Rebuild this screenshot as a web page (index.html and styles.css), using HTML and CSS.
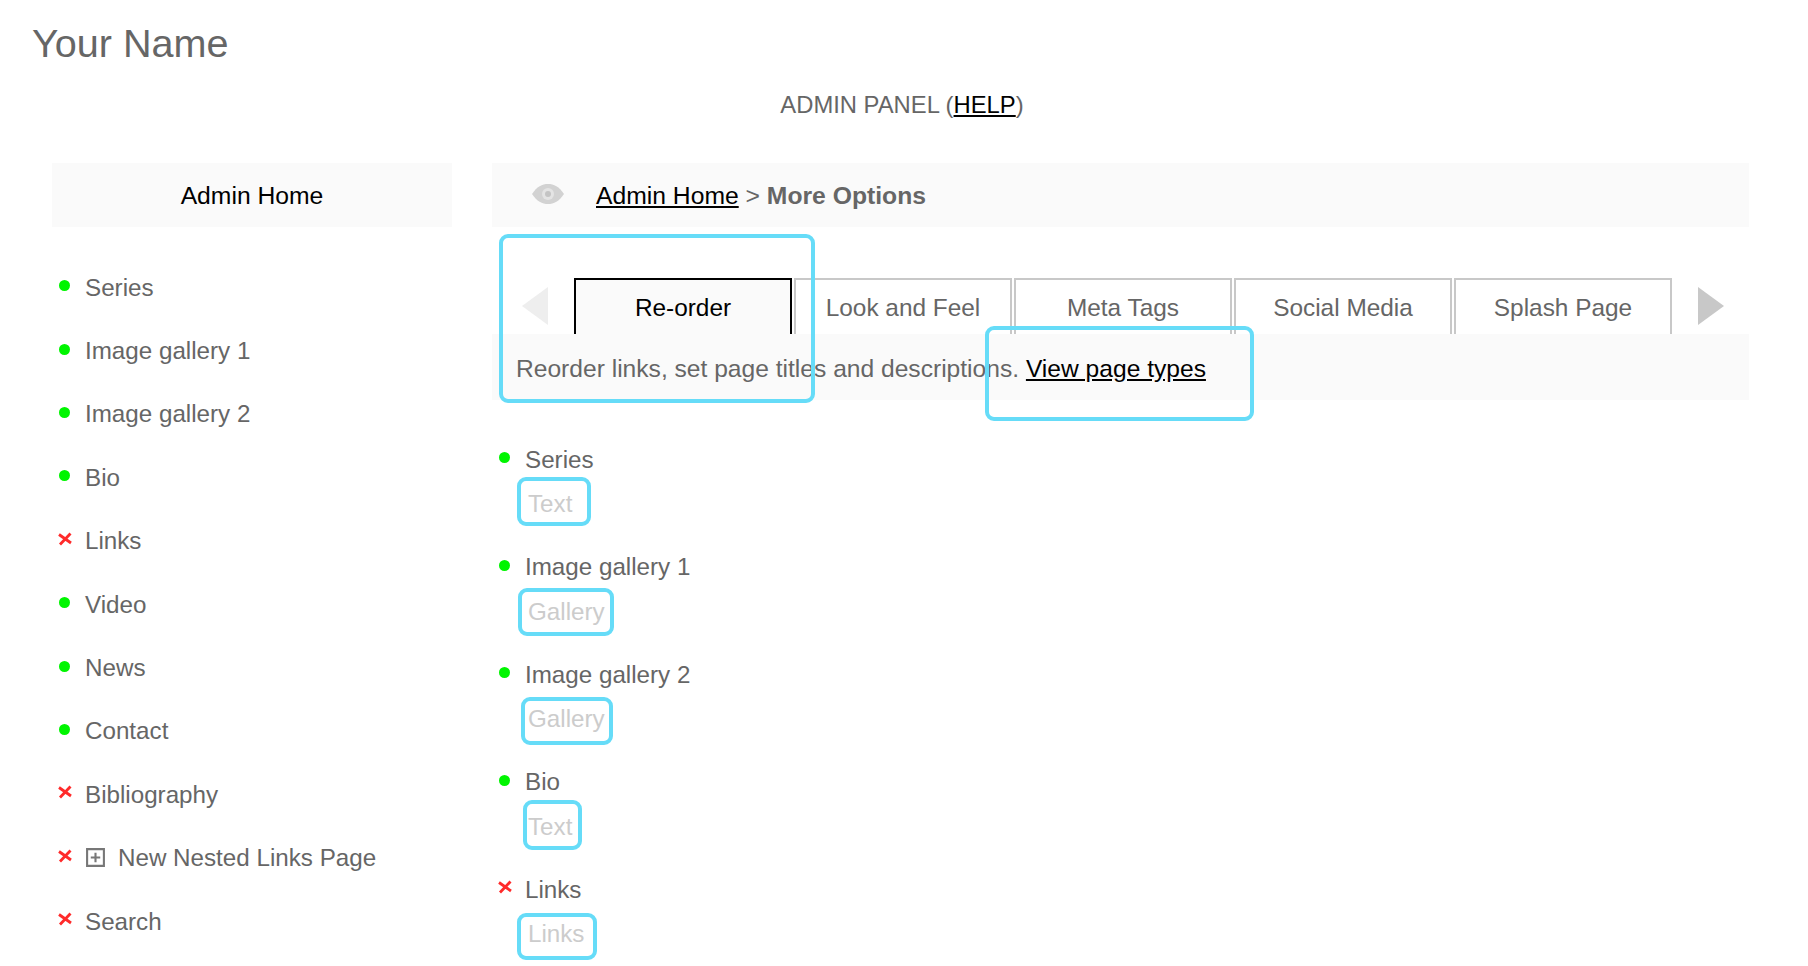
FILE: index.html
```html
<!DOCTYPE html>
<html lang="en">
<head>
    <meta charset="UTF-8">
    <title>Admin Panel</title>
    <link rel="stylesheet" href="styles.css">
</head>
<body>
    <h1 class="site-name">Your Name</h1>
    <p class="panel-title">ADMIN PANEL (<a href="#">HELP</a>)</p>

    <div class="columns">
        <div class="sidebar">
            <div class="side-head"><a href="#">Admin Home</a></div>
            <ul class="side-list">
                <li><span class="dot"></span>Series</li>
                <li><span class="dot"></span>Image gallery 1</li>
                <li><span class="dot"></span>Image gallery 2</li>
                <li><span class="dot"></span>Bio</li>
                <li><svg class="cross" viewBox="0 0 16 14"><path d="M2 2.5 14 11M13.5 1.5 3 12.5"/></svg>Links</li>
                <li><span class="dot"></span>Video</li>
                <li><span class="dot"></span>News</li>
                <li><span class="dot"></span>Contact</li>
                <li><svg class="cross" viewBox="0 0 16 14"><path d="M2 2.5 14 11M13.5 1.5 3 12.5"/></svg>Bibliography</li>
                <li>
                    <svg class="cross" viewBox="0 0 16 14"><path d="M2 2.5 14 11M13.5 1.5 3 12.5"/></svg>
                    <svg class="expand" viewBox="0 0 20 20"><path d="M2 2h16v16H2zM10 5.5v9M5.5 10h9"/></svg>New Nested Links Page
                </li>
                <li><svg class="cross" viewBox="0 0 16 14"><path d="M2 2.5 14 11M13.5 1.5 3 12.5"/></svg>Search</li>
            </ul>
        </div>

        <div class="main">
            <div class="crumbs">
                <svg class="eye" viewBox="0 0 34 22"><path class="eye-shape" d="M1 11C6 3.5 11 1 17 1s11 2.500 16 10c-5 7.500-10 10-16 10S6 18.500 1 11z"/><circle class="eye-ring" cx="17" cy="11" r="6"/><circle class="eye-pupil" cx="17" cy="11" r="3"/></svg>
                <a href="#">Admin Home</a>&nbsp;&gt;&nbsp;<strong>More Options</strong>
            </div>

            <div class="tabs">
                <span class="arrow arrow-left"></span>
                <a class="tab active" href="#">Re-order</a>
                <a class="tab" href="#">Look and Feel</a>
                <a class="tab" href="#">Meta Tags</a>
                <a class="tab" href="#">Social Media</a>
                <a class="tab" href="#">Splash Page</a>
                <span class="arrow arrow-right"></span>
            </div>
            <div class="tab-desc">Reorder links, set page titles and descriptions. <a href="#">View page types</a></div>

            <div class="page-list">
                <div class="page-item">
                    <div class="page-name"><span class="dot"></span>Series</div>
                    <div class="page-type">Text</div>
                </div>
                <div class="page-item">
                    <div class="page-name"><span class="dot"></span>Image gallery 1</div>
                    <div class="page-type">Gallery</div>
                </div>
                <div class="page-item">
                    <div class="page-name"><span class="dot"></span>Image gallery 2</div>
                    <div class="page-type">Gallery</div>
                </div>
                <div class="page-item">
                    <div class="page-name"><span class="dot"></span>Bio</div>
                    <div class="page-type">Text</div>
                </div>
                <div class="page-item">
                    <div class="page-name"><svg class="cross" viewBox="0 0 16 14"><path d="M2 2.5 14 11M13.5 1.5 3 12.5"/></svg>Links</div>
                    <div class="page-type">Links</div>
                </div>
            </div>
        </div>
    </div>

    <!-- callouts drawn over the screenshot -->
    <div class="mark mark-tabs"></div>
    <div class="mark mark-types"></div>
    <div class="mark mark-series"></div>
    <div class="mark mark-gallery1"></div>
    <div class="mark mark-gallery2"></div>
    <div class="mark mark-bio"></div>
    <div class="mark mark-links"></div>
</body>
</html>
```

FILE: styles.css
```css
html, body {
    height: 966px;
    overflow: hidden;
}
body {
    margin: 0;
    position: relative;
    font-family: 'Liberation Sans', Arial, sans-serif;
    font-size: 24.2px;
    color: #666;
    background-color: #fff;
}
a {
    color: #000;
}
.site-name {
    margin: 0;
    padding: 20px 0 0 32px;
    height: 46px;
    font-size: 39.6px;
    font-weight: 400;
    line-height: 46px;
}
.panel-title {
    margin: 0;
    padding: 25px 4px 0 0;
    height: 26px;
    font-size: 23.8px;
    line-height: 28px;
    text-align: center;
}
.columns {
    display: flex;
    gap: 40px;
    margin-top: 46px;
    padding-left: 52px;
}
.sidebar {
    width: 400px;
}
.side-head {
    height: 64px;
    font-size: 24.7px;
    line-height: 65px;
    text-align: center;
    background-color: #fafafa;
}
.side-head a {
    text-decoration: none;
}
.side-list {
    list-style: none;
    margin: 29px 0 0;
    padding: 0;
}
.side-list li {
    display: flex;
    align-items: center;
    height: 63.4px;
    padding-left: 7px;
}
.dot {
    flex: none;
    width: 11px;
    height: 11px;
    margin-top: -4px;
    margin-right: 15px;
    border-radius: 50%;
    background-color: #00f500;
}
.cross {
    flex: none;
    width: 16px;
    height: 14px;
    margin-top: -5px;
    margin-right: 12px;
    margin-left: -2px;
}
.cross path {
    fill: none;
    stroke: #ff2a2a;
    stroke-width: 2.8;
}
.expand {
    flex: none;
    width: 21px;
    height: 21px;
    margin-right: 12px;
    margin-top: -1px;
}
.expand path {
    fill: none;
    stroke: #777;
    stroke-width: 2;
}
.main {
    width: 1257px;
}
.crumbs {
    display: flex;
    align-items: center;
    height: 64px;
    padding: 1px 0 0 39px;
    box-sizing: border-box;
    font-size: 24.7px;
    background-color: #fafafa;
}
.crumbs strong {
    font-weight: 700;
}
.eye {
    width: 34px;
    height: 22px;
    margin-right: 31px;
    margin-top: -3px;
}
.eye-shape {
    fill: #d2d2d2;
}
.eye-ring {
    fill: #e4e4e4;
}
.eye-pupil {
    fill: #c4c4c4;
}
.tabs {
    display: flex;
    align-items: center;
    gap: 2px;
    margin-top: 51px;
    height: 56px;
    padding-left: 30px;
}
.tab {
    box-sizing: border-box;
    flex: none;
    width: 218px;
    height: 56px;
    font-size: 24.4px;
    line-height: 55px;
    border: 2px solid #c8c8c8;
    border-bottom: 0;
    color: #666;
    text-align: center;
    text-decoration: none;
}
.tab.active {
    border-color: #000;
    color: #000;
    background-color: #fafafa;
}
.arrow {
    flex: none;
    width: 0;
    height: 0;
    border-top: 19px solid transparent;
    border-bottom: 19px solid transparent;
}
.arrow-left {
    margin-right: 24px;
    border-right: 26px solid #eee;
}
.arrow-right {
    margin-left: 24px;
    border-left: 26px solid #c8c8c8;
}
.tab-desc {
    height: 66px;
    padding-left: 24px;
    font-size: 24.6px;
    line-height: 69px;
    background-color: #fafafa;
}
.page-list {
    margin-top: 44px;
}
.page-item {
    height: 107.6px;
}
.page-name {
    display: flex;
    align-items: center;
    height: 31px;
    padding-left: 7px;
}
.page-name .dot {
    margin-right: 15px;
}
.page-name .cross {
    margin-right: 12px;
}
.page-type {
    margin-top: 15px;
    padding-left: 36px;
    line-height: 28px;
    color: #ccc;
}
.mark {
    position: absolute;
    box-sizing: border-box;
    border: 4px solid #66dcf8;
    border-radius: 9px;
}
.mark-tabs {
    left: 499px;
    top: 234px;
    width: 316px;
    height: 169px;
}
.mark-types {
    left: 985px;
    top: 326px;
    width: 269px;
    height: 95px;
}
.mark-series {
    left: 517px;
    top: 477px;
    width: 74px;
    height: 49px;
}
.mark-gallery1 {
    left: 518px;
    top: 588px;
    width: 96px;
    height: 48px;
}
.mark-gallery2 {
    left: 521px;
    top: 697px;
    width: 92px;
    height: 48px;
}
.mark-bio {
    left: 523px;
    top: 800px;
    width: 59px;
    height: 50px;
}
.mark-links {
    left: 517px;
    top: 913px;
    width: 80px;
    height: 47px;
}
```
